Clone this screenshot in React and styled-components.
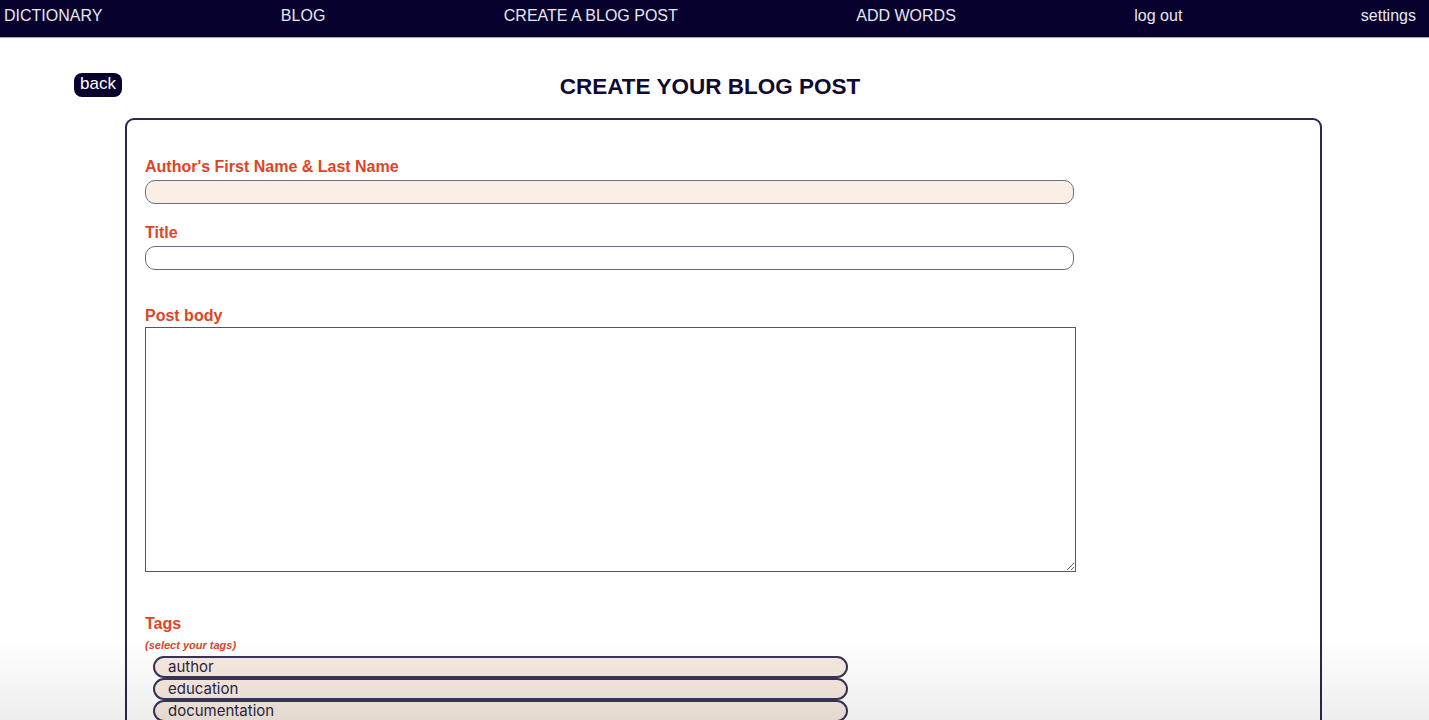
import styled, { createGlobalStyle } from "styled-components";

const GlobalStyle = createGlobalStyle`
  html, body {
    margin: 0;
    padding: 0;
    background: #ffffff;
    font-family: "Liberation Sans", Arial, sans-serif;
    overflow: hidden;
  }
`;

const Nav = styled.nav`
  display: flex;
  justify-content: space-between;
  align-items: center;
  height: 38px;
  padding: 0 13px 5px 4px;
  box-sizing: border-box;
  background-color: #07012e;
  border-bottom: 1px solid #a9a6c4;
`;

const NavLink = styled.a`
  color: #e9e7f1;
  font-size: 16px;
  text-decoration: none;
`;

const Page = styled.main`
  display: flex;
  flex-direction: column;
  padding: 34px 107px 0 125px;
`;

const Header = styled.div`
  display: grid;
  grid-template-columns: 1fr auto 1fr;
  align-items: center;
  margin-left: -51px;
  margin-right: -24px;
  height: 30px;
  margin-bottom: 16px;
`;

const BackButton = styled.button`
  justify-self: start;
  background-color: #07012e;
  color: #ffffff;
  font-family: "Liberation Sans", Arial, sans-serif;
  font-size: 17px;
  border: none;
  border-radius: 8px;
  padding: 1px 6px 3px;
  margin-top: -5px;
`;

const Title = styled.h1`
  margin: 0;
  font-size: 22.5px;
  font-weight: bold;
  color: #0f0b33;
`;

const Card = styled.form`
  display: flex;
  flex-direction: column;
  border: 2px solid #2c2750;
  border-radius: 9px;
  padding: 38px 18px 40px;
  height: 640px;
`;

const Label = styled.label`
  color: #dd4526;
  font-size: 16px;
  font-weight: bold;
  margin-top: ${(p) => p.$top || 0}px;
  margin-bottom: ${(p) => (p.$bottom === undefined ? 4 : p.$bottom)}px;
  line-height: 18px;
`;

const TextInput = styled.input`
  width: 929px;
  height: 24px;
  box-sizing: border-box;
  border: 1px solid #6e6a87;
  border-radius: 10px;
  background-color: ${(p) => (p.$filled ? "#fbefe5" : "#ffffff")};
  outline: none;
`;

const TextArea = styled.textarea`
  width: 931px;
  height: 245px;
  box-sizing: border-box;
  border: 1px solid #55516f;
  resize: both;
  font-family: inherit;
  margin: 0;
`;

const Hint = styled.span`
  color: #dd4526;
  font-size: 11px;
  line-height: 12px;
  font-weight: bold;
  font-style: italic;
  margin: 0 0 5px;
`;

const TagList = styled.div`
  display: flex;
  flex-direction: column;
  padding-left: 8px;
`;

const Tag = styled.div`
  width: 695px;
  height: 22px;
  box-sizing: border-box;
  border: 2px solid #3a3557;
  border-radius: 11px;
  background-color: #f7ebe1;
  color: #2a2640;
  font-family: Inter, "Liberation Sans", sans-serif;
  font-size: 15px;
  line-height: 18px;
  padding-left: 13px;
`;

const Shade = styled.div`
  position: fixed;
  left: 0;
  right: 0;
  bottom: 0;
  height: 80px;
  pointer-events: none;
  background: linear-gradient(to bottom, rgba(0, 0, 0, 0), rgba(0, 0, 0, 0.07));
`;

const NAV_ITEMS = ["DICTIONARY", "BLOG", "CREATE A BLOG POST", "ADD WORDS", "log out", "settings"];
const TAGS = ["author", "education", "documentation", "grammar"];

const App = () => {
  return (
    <>
      <GlobalStyle />
      <Nav>
        {NAV_ITEMS.map((item) => (
          <NavLink key={item} href="#">
            {item}
          </NavLink>
        ))}
      </Nav>
      <Page>
        <Header>
          <BackButton type="button">back</BackButton>
          <Title>CREATE YOUR BLOG POST</Title>
          <span />
        </Header>
        <Card>
          <Label>Author's First Name &amp; Last Name</Label>
          <TextInput $filled />
          <Label $top={20}>Title</Label>
          <TextInput />
          <Label $top={37} $bottom={2}>Post body</Label>
          <TextArea />
          <Label $top={43} $bottom={6}>Tags</Label>
          <Hint>(select your tags)</Hint>
          <TagList>
            {TAGS.map((tag) => (
              <Tag key={tag}>{tag}</Tag>
            ))}
          </TagList>
        </Card>
      </Page>
      <Shade />
    </>
  );
};

export default App;
